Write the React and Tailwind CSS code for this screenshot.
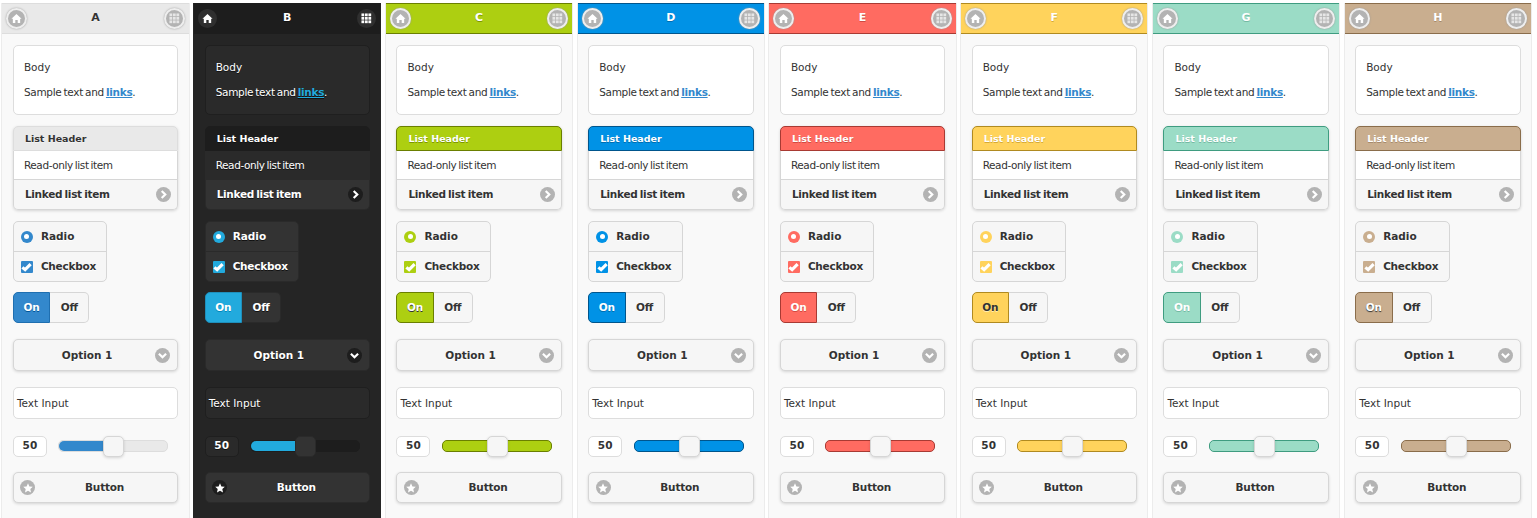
const themes = [
  { name: "A", col: "bg-[#f9f9f9] border-[#ececec]", bar: "bg-[#e9e9e9] border-[#dddddd] text-[#333333] [text-shadow:0_1px_0_#f3f3f3]", listHead: "bg-[#e9e9e9] border-[#dddddd] text-[#333333] [text-shadow:0_1px_0_#f3f3f3]", accent: "bg-[#3388cc]", onCls: "bg-[#3388cc] border-[#1f6fb0] text-white [text-shadow:0_1px_0_#005599]", track: "bg-[#e9e9e9] border-[#dddddd]", fill: "bg-[#3388cc]" },
  { dark: true, name: "B", col: "bg-[#252525] border-[#252525]", bar: "bg-[#1d1d1d] border-[#1d1d1d] text-white [text-shadow:0_1px_0_#111111]", listHead: "bg-[#1d1d1d] border-[#1d1d1d] text-white [text-shadow:0_1px_0_#111111]", accent: "bg-[#22aadd]", onCls: "bg-[#22aadd] border-[#1f8fbb] text-white [text-shadow:0_1px_0_#0088bb]", track: "bg-[#1d1d1d] border-[#1d1d1d]", fill: "bg-[#22aadd]" },
  { name: "C", col: "bg-[#f9f9f9] border-[#ececec]", bar: "bg-[#adcf11] border-[#6a7f00] text-white [text-shadow:0_1px_0_#7c9500]", listHead: "bg-[#adcf11] border-[#6a7f00] text-white [text-shadow:0_1px_0_#7c9500]", accent: "bg-[#adcf11]", onCls: "bg-[#adcf11] border-[#6a7f00] text-white [text-shadow:0_1px_0_#333333]", track: "bg-[#adcf11] border-[#6a7f00]", fill: "bg-[#adcf11]" },
  { name: "D", col: "bg-[#f9f9f9] border-[#ececec]", bar: "bg-[#0092e6] border-[#00558c] text-white [text-shadow:0_1px_0_#006db0]", listHead: "bg-[#0092e6] border-[#00558c] text-white [text-shadow:0_1px_0_#006db0]", accent: "bg-[#0092e6]", onCls: "bg-[#0092e6] border-[#00558c] text-white [text-shadow:0_1px_0_#006db0]", track: "bg-[#0092e6] border-[#00558c]", fill: "bg-[#0092e6]" },
  { name: "E", col: "bg-[#f9f9f9] border-[#ececec]", bar: "bg-[#ff6b61] border-[#a83a33] text-white [text-shadow:0_1px_0_#d04a42]", listHead: "bg-[#ff6b61] border-[#a83a33] text-white [text-shadow:0_1px_0_#d04a42]", accent: "bg-[#ff6b61]", onCls: "bg-[#ff6b61] border-[#a83a33] text-white [text-shadow:0_1px_0_#d04a42]", track: "bg-[#ff6b61] border-[#a83a33]", fill: "bg-[#ff6b61]" },
  { name: "F", col: "bg-[#f9f9f9] border-[#ececec]", bar: "bg-[#ffd35c] border-[#b08a20] text-white [text-shadow:0_1px_0_#d6a935]", listHead: "bg-[#ffd35c] border-[#b08a20] text-white [text-shadow:0_1px_0_#d6a935]", accent: "bg-[#ffd35c]", onCls: "bg-[#ffd35c] border-[#b08a20] text-[#333333] [text-shadow:0_1px_0_#ffeeb0]", track: "bg-[#ffd35c] border-[#b08a20]", fill: "bg-[#ffd35c]" },
  { name: "G", col: "bg-[#f9f9f9] border-[#ececec]", bar: "bg-[#9bdcc6] border-[#3f9c80] text-white [text-shadow:0_1px_0_#74b9a2]", listHead: "bg-[#9bdcc6] border-[#3f9c80] text-white [text-shadow:0_1px_0_#74b9a2]", accent: "bg-[#9bdcc6]", onCls: "bg-[#9bdcc6] border-[#3f9c80] text-white [text-shadow:0_1px_0_#74b9a2]", track: "bg-[#9bdcc6] border-[#3f9c80]", fill: "bg-[#9bdcc6]" },
  { name: "H", col: "bg-[#f9f9f9] border-[#ececec]", bar: "bg-[#c9ae8f] border-[#8a6d4b] text-white [text-shadow:0_1px_0_#a68a6b]", listHead: "bg-[#c9ae8f] border-[#8a6d4b] text-white [text-shadow:0_1px_0_#a68a6b]", accent: "bg-[#c9ae8f]", onCls: "bg-[#c9ae8f] border-[#8a6d4b] text-white [text-shadow:0_1px_1px_#333333]", track: "bg-[#c9ae8f] border-[#8a6d4b]", fill: "bg-[#c9ae8f]" },
];

function Home() {
  return (
    <svg viewBox="0 0 12 12" className="w-[11px] h-[11px]" fill="#fff">
      <path d="M6 1 L11.5 6.2 L10 6.2 L10 11 L7.3 11 L7.3 7.6 L4.7 7.6 L4.7 11 L2 11 L2 6.2 L0.5 6.2 Z" />
    </svg>
  );
}
function Grid({ dark }) {
  const cells = [];
  for (let y = 0; y < 3; y++) for (let x = 0; x < 3; x++) cells.push(<rect key={x + "-" + y} x={0.5 + x * 3.8} y={0.5 + y * 3.8} width="3" height="3" />);
  return (
    <svg viewBox="0 0 12 12" className="w-[11px] h-[11px]" fill={dark ? "#fff" : "#e6e6e6"}>
      {cells}
    </svg>
  );
}
function Round({ dark, children }) {
  return dark ? (
    <span className="w-[19px] h-[19px] rounded-full bg-[#2f2f2f] flex items-center justify-center">{children}</span>
  ) : (
    <span className="w-[21px] h-[21px] rounded-full bg-[#b3b3b3] border-[2.5px] border-[#eeeeee] shadow-[0_0_2px_#999999] flex items-center justify-center">{children}</span>
  );
}
function Mini({ dark, children }) {
  return (
    <span className={"w-[15px] h-[15px] rounded-full flex items-center justify-center " + (dark ? "bg-[#1d1d1d]" : "bg-[#b3b3b3]")}>{children}</span>
  );
}
const Right = () => (
  <svg viewBox="0 0 10 10" className="w-[9px] h-[9px]" fill="none" stroke="#fff" strokeWidth="2.4"><path d="M3 1 L7 5 L3 9" /></svg>
);
const Down = () => (
  <svg viewBox="0 0 10 10" className="w-[9px] h-[9px]" fill="none" stroke="#fff" strokeWidth="2.4"><path d="M1 3 L5 7 L9 3" /></svg>
);
const Star = () => (
  <svg viewBox="0 0 10 10" className="w-[10px] h-[10px]" fill="#fff"><path d="M5 0.3 L6.4 3.4 L9.8 3.8 L7.3 6.1 L8 9.5 L5 7.8 L2 9.5 L2.7 6.1 L0.2 3.8 L3.6 3.4 Z" /></svg>
);
const Check = () => (
  <svg viewBox="0 0 12 12" className="w-[11px] h-[11px]" fill="none" stroke="#fff" strokeWidth="3.4"><path d="M1.5 7 L4.5 9.5 L10.5 3.5" /></svg>
);

function Column({ t }) {
  const d = t.dark;
  const txt = d ? "text-white [text-shadow:0_1px_0_#111111]" : "text-[#333333] [text-shadow:0_1px_0_#ffffff]";
  const surface = d ? "bg-[#333333]" : "bg-[#f6f6f6]";
  const edge = d ? "border-[#2a2a2a]" : "border-[#d6d6d6]";
  const soft = d ? "" : "shadow-[0_1px_3px_rgba(0,0,0,0.15)]";
  const field = d ? "bg-[#2a2a2a] border-[#1f1f1f]" : "bg-white border-[#dddddd]";
  const link = d ? "text-[#22aadd]" : "text-[#3388cc]";
  const tight = "tracking-[-0.3px] [word-spacing:-1px]";
  return (
    <div className={"flex flex-col h-[515px] border-x " + t.col + " " + txt}>
      <div className={"h-[31px] shrink-0 border-y flex items-center justify-between px-[4px] text-[11px] font-bold " + t.bar}>
        <Round dark={d}><Home /></Round>
        <span>{t.name}</span>
        <Round dark={d}><Grid dark={d} /></Round>
      </div>
      <div className="flex flex-col pl-[10.5px] pr-[10.4px] pt-[11px]">
        <div className={"h-[70px] rounded-[5px] border px-[10px] pt-[13px] text-[10.5px] " + field}>
          <p className="leading-[16px]">Body</p>
          <p className={"leading-[16px] mt-[9px] " + tight}>Sample text and <a className={"font-bold underline " + link}>links</a>.</p>
        </div>

        <div className={"mt-[11px] h-[84px] rounded-[5px] flex flex-col " + soft}>
          <div className={"h-[25px] shrink-0 rounded-t-[5px] border flex items-center px-[11px] pt-[1px] text-[9.5px] font-bold " + t.listHead}>List Header</div>
          <div className={"h-[29px] shrink-0 border-x border-b flex items-center px-[10px] pt-[1px] text-[10.5px] tracking-[-0.4px] [word-spacing:-1px] " + (d ? "bg-[#2a2a2a] border-[#2a2a2a]" : "bg-white border-[#d6d6d6]")}>Read-only list item</div>
          <div className={"flex-1 rounded-b-[5px] border-x border-b flex items-center justify-between pl-[11px] pr-[6px] text-[10.5px] font-bold " + tight + " " + surface + " " + edge}>
            <span>Linked list item</span>
            <Mini dark={d}><Right /></Mini>
          </div>
        </div>

        <div className={"mt-[11px] w-[94.5px] h-[61px] rounded-[5px] border flex flex-col text-[10.5px] font-bold " + surface + " " + edge}>
          <div className={"h-[30px] flex items-center gap-[8px] pl-[7px] border-b " + edge}>
            <span className={"w-[12px] h-[12px] rounded-full flex items-center justify-center " + t.accent}><span className="w-[5px] h-[5px] rounded-full bg-white" /></span>
            <span>Radio</span>
          </div>
          <div className="flex-1 flex items-center gap-[8px] pl-[7px]">
            <span className={"w-[12px] h-[12px] rounded-[1px] flex items-center justify-center " + t.accent}><Check /></span>
            <span className="tracking-[-0.25px]">Checkbox</span>
          </div>
        </div>

        <div className="mt-[10px] flex h-[31px] w-[76.5px] text-[10.5px] font-bold">
          <div className={"w-[37.5px] rounded-l-[5px] border flex items-center justify-center " + t.onCls}>On</div>
          <div className={"flex-1 rounded-r-[5px] border border-l-0 flex items-center justify-center " + surface + " " + edge}>Off</div>
        </div>

        <div className={"mt-[16px] h-[32px] rounded-[5px] border flex items-center justify-between pr-[7px] text-[10.5px] font-bold " + surface + " " + edge + " " + soft}>
          <span className="flex-1 text-center pl-[5px] pt-[1px]">Option 1</span>
          <Mini dark={d}><Down /></Mini>
        </div>

        <div className={"mt-[16px] h-[32px] rounded-[5px] border flex items-center pl-[3px] pt-[1px] text-[10.5px] " + field}>Text Input</div>

        <div className="mt-[16px] h-[22px] flex items-center">
          <div className={"w-[34px] h-[21px] rounded-[5px] border flex items-center justify-center text-[10.5px] font-bold " + field}>50</div>
          <div className={"relative ml-[11.5px] w-[110px] h-[12px] rounded-[5px] border " + t.track}>
            <div className={"h-full w-1/2 rounded-l-[5px] " + t.fill} />
            <div className={"absolute left-[44px] top-[-5px] w-[21px] h-[21px] rounded-[5px] border " + surface + " " + edge + " " + soft} />
          </div>
        </div>

        <div className={"relative mt-[15px] h-[31px] rounded-[5px] border flex items-center justify-center pl-[18px] text-[10.5px] font-bold tracking-[-0.2px] " + surface + " " + edge + " " + soft}>
          <span className="absolute left-[6.5px] top-[7px]"><Mini dark={d}><Star /></Mini></span>
          Button
        </div>
      </div>
    </div>
  );
}

export default function App() {
  return (
    <div className="w-[1537px] h-[518px] overflow-hidden bg-white pt-[3px] pl-[1.4px] pr-[5.1px] grid grid-cols-8 gap-x-[3.5px] [font-family:'DejaVu_Sans',sans-serif]">
      {themes.map((t) => <Column key={t.name} t={t} />)}
    </div>
  );
}
